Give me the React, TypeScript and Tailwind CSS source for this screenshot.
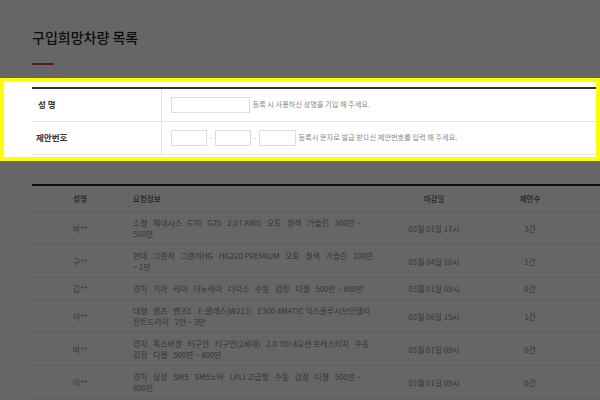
const rows = [
  { name: '박**', info: ['소형', '제네시스', 'G70', 'G70', '2.0T AWD', '오토', '흰색', '가솔린', '300만 ~ 500만'], due: '03월 01일 17시', count: '3건' },
  { name: '구**', info: ['현대', '그랜저', '그랜저HG', 'HG220 PREMIUM', '오토', '흰색', '가솔린', '100만 ~ 1만'], due: '03월 04일 10시', count: '1건' },
  { name: '김**', info: ['경차', '기아', '레이', '더뉴레이', '디럭스', '수동', '검정', '디젤', '500만 ~ 800만'], due: '03월 01일 09시', count: '0건' },
  { name: '이**', info: ['대형', '벤츠', '벤츠E', 'E-클래스(W213)', 'E300 4MATIC 익스클루시브인텔리전트드라이', '2만 ~ 3만'], due: '03월 06일 15시', count: '1건' },
  { name: '마**', info: ['경차', '폭스바겐', '티구안', '티구안(2세대)', '2.0 TDI 4모션 프레스티지', '수동', '검정', '디젤', '500만 ~ 800만'], due: '03월 01일 09시', count: '0건' },
  { name: '이**', info: ['경차', '삼성', 'SM5', 'SM5노바', 'LPLI 고급형', '수동', '검정', '디젤', '500만 ~ 800만'], due: '03월 01일 09시', count: '0건' },
]

function Info({ parts }: { parts: string[] }) {
  return (
    <>
      {parts.map((p, i) => (
        <span key={i}>
          <span className={i < parts.length - 1 ? 'mr-[4px]' : ''}>{p}</span>{' '}
        </span>
      ))}
    </>
  )
}

export default function App() {
  return (
    <div className="relative min-h-[400px] h-[400px] overflow-hidden bg-white font-['Noto_Sans_CJK_KR','Noto_Sans',sans-serif]">
      <div className="pl-[32px] pt-[27px]">
        <h2 className="text-[14px] leading-[20px] font-medium text-[#222]">구입희망차량 목록</h2>
        <div className="mt-[16px] h-[2px] w-[22px] bg-[#e84a6a]" />
      </div>

      {/* highlighted search form */}
      <div className="relative z-20 mt-[13px] border-4 border-[#ffff00] bg-white pl-[28px] pt-[5px] pb-[2px]">
        <table className="w-full table-fixed border-collapse border-t-2 border-[#333]">
          <colgroup>
            <col className="w-[129px]" />
            <col />
          </colgroup>
          <tbody>
            <tr className="h-[33px] border-b border-[#e5e5e5]">
              <th className="border-r border-[#e5e5e5] pl-[6px] text-left text-[8.5px] font-bold text-[#333]">성 명</th>
              <td className="pl-[9px]">
                <div className="flex items-center">
                  <input className="h-[16px] w-[79px] border border-[#ddd] outline-none" />
                  <span className="ml-[3px] text-[7.2px] text-[#888]">등록 시 사용하신 성명을 기입 해 주세요.</span>
                </div>
              </td>
            </tr>
            <tr className="h-[33px] border-b border-[#e5e5e5]">
              <th className="border-r border-[#e5e5e5] pl-[4px] text-left text-[8.5px] font-bold text-[#333]">제안번호</th>
              <td className="pl-[9px]">
                <div className="flex items-center">
                  <input className="h-[16px] w-[36px] border border-[#ddd] outline-none" />
                  <span className="mx-[3px] w-[2px] text-center text-[7px] text-[#999]">-</span>
                  <input className="h-[16px] w-[36px] border border-[#ddd] outline-none" />
                  <span className="mx-[3px] w-[2px] text-center text-[7px] text-[#999]">-</span>
                  <input className="h-[16px] w-[37px] border border-[#ddd] outline-none" />
                  <span className="ml-[3px] text-[7.2px] text-[#888]">등록시 문자로 발급 받으신 제안번호를 입력 해 주세요.</span>
                </div>
              </td>
            </tr>
          </tbody>
        </table>
      </div>

      {/* request list */}
      <div className="pl-[32px] pt-[23px]">
        <table className="w-full table-fixed border-collapse border-t-2 border-[#222]">
          <colgroup>
            <col className="w-[96px]" />
            <col className="w-[252px]" />
            <col className="w-[108px]" />
            <col className="w-[84px]" />
            <col />
          </colgroup>
          <thead>
            <tr className="h-[27px] border-b border-[#eee] text-[7.5px] font-medium text-[#555]">
              <th className="text-center font-medium">성명</th>
              <th className="pl-[5px] text-left font-medium">요청정보</th>
              <th className="text-center font-medium">마감일</th>
              <th className="text-center font-medium">제안수</th>
              <th />
            </tr>
          </thead>
          <tbody className="text-[7.8px] leading-[11px] text-[#888]">
            {rows.map((r, i) => (
              <tr key={i} className="border-b border-[#eee]">
                <td className="text-center">{r.name}</td>
                <td className="px-[5px] py-[5px]">
                  <Info parts={r.info} />
                </td>
                <td className="text-center">{r.due}</td>
                <td className="text-center">{r.count}</td>
                <td />
              </tr>
            ))}
          </tbody>
        </table>
      </div>

      <div className="absolute inset-0 z-10 bg-black/60" />
    </div>
  )
}
